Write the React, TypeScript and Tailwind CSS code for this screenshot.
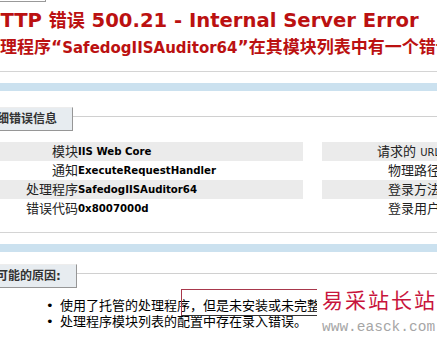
const leftRows = [
  { label: '模块', value: 'IIS Web Core' },
  { label: '通知', value: 'ExecuteRequestHandler' },
  { label: '处理程序', value: 'SafedogIISAuditor64' },
  { label: '错误代码', value: '0x8007000d' },
]

const rightRows = ['请求的 URL', '物理路径', '登录方法', '登录用户']

function Legend({ text, shift }: { text: string; shift: string }) {
  // fieldset legend look: tab box sitting on the fieldset top border
  return (
    <div className="flex items-start">
      <div
        className={`${shift} shrink-0 whitespace-nowrap border-t border-l border-t-[#ededed] border-l-[#ededed] border-r border-b border-r-[#969696] border-b-[#969696] bg-[#e7ecf0] py-[4px] pl-[10px] pr-[15px] text-[12px] font-bold leading-[14px] text-[#333]`}
      >
        {text}
      </div>
      <div className="mt-[9px] h-px flex-1 bg-[#d0d0d0]" />
    </div>
  )
}

function Band() {
  return (
    <>
      <div className="h-px bg-[#d4d4d4]" />
      <div className="h-[11px]" />
      <div className="h-[8px] bg-[#cbe1ef]" />
    </>
  )
}

export default function App() {
  return (
    <div className="relative h-[344px] w-[437px] overflow-hidden bg-white font-['DejaVu_Sans','Noto_Sans_CJK_SC',sans-serif] text-black">
      {/* remnant of the box above */}
      <div className="h-[2px] w-[46px] border-b border-r border-[#999]" />

      {/* header */}
      <div className="ml-[-16px] mt-[8px] whitespace-nowrap text-[#bb1111]">
        <h1 className="text-[19.6px] font-bold leading-[22px]">
          HTTP <span className="text-[18px]">错误</span> 500.21 - Internal Server Error
        </h1>
        <h2 className="ml-[-1px] mt-[5px] text-[15px] font-bold leading-[20px]">
          <span className="text-[17px]">处理程序“</span>SafedogIISAuditor64<span className="text-[17px]">”在其模块列表中有一个错误模块“</span>ManagedPipelineHandler”
        </h2>
      </div>
      <div className="h-[13px]" />
      <Band />

      {/* detailed error info */}
      <div className="pt-[16px]">
        <Legend text="详细错误信息" shift="ml-[-26px]" />
        <div className="mt-[11px] flex gap-[19px]">
          <div className="w-[303px] shrink-0">
            {leftRows.map((r, i) => (
              <div
                key={r.label}
                className={`flex h-[19px] items-center ${i % 2 === 0 ? 'bg-[#ebebeb]' : ''}`}
              >
                <div className="w-[78px] shrink-0 text-right text-[13px] leading-[19px] text-[#222]">{r.label}</div>
                <div className="whitespace-nowrap text-[10.2px] font-bold leading-[19px]">{r.value}</div>
              </div>
            ))}
          </div>
          <div className="w-[400px] shrink-0">
            {rightRows.map((label, i) => (
              <div
                key={label}
                className={`flex h-[19px] items-center ${i % 2 === 0 ? 'bg-[#ebebeb]' : ''}`}
              >
                <div className="w-[118px] shrink-0 whitespace-nowrap text-right text-[13px] leading-[19px] text-[#222]">
                  {label.endsWith('URL') ? (
                    <>
                      请求的 <span className="text-[10px]">URL</span>
                    </>
                  ) : (
                    label
                  )}
                </div>
              </div>
            ))}
          </div>
        </div>
        <div className="h-[14px]" />
      </div>
      <Band />

      {/* possible causes */}
      <div className="pt-[12px]">
        <Legend text="可能的原因:" shift="ml-[-15px]" />
        <ul className="mt-[10px] text-[13px] leading-[16px]">
          <li className="flex whitespace-nowrap">
            <span className="w-[60px] shrink-0 pl-[46px]">•</span>
            使用了托管的处理程序，但是未安装或未完整安装 ASP.NET。
          </li>
          <li className="flex whitespace-nowrap">
            <span className="w-[60px] shrink-0 pl-[46px]">•</span>
            处理程序模块列表的配置中存在录入错误。
          </li>
        </ul>
      </div>

      {/* watermark overlay */}
      <div className="absolute left-[181px] top-[289px] h-[27px] w-[137px] border-t border-l border-b border-t-[#a8384c] border-l-[#a8384c] border-b-[#333]" />
      <div className="absolute left-[317px] top-[284px] h-[60px] w-[120px] bg-white pl-[5px]">
        <div className="mt-[4px] whitespace-nowrap text-[21px] leading-[26px] tracking-[2px] text-[#c8143c]">易采站长站</div>
        <div className="mt-[5px] whitespace-nowrap font-['Liberation_Mono',monospace] text-[14.5px] leading-[16px] text-[#a6a6a6]">
          www.easck.com
        </div>
      </div>
    </div>
  )
}
